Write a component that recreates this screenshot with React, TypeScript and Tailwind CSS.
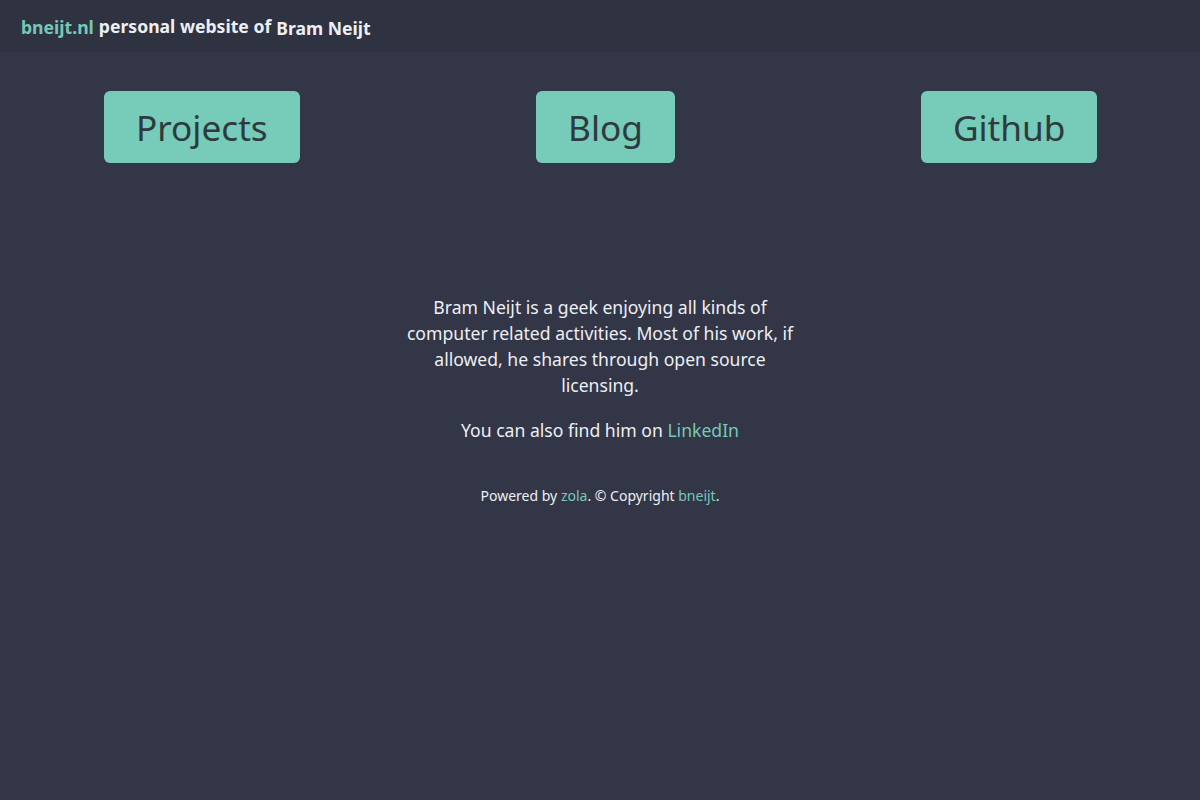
const links = [
  { label: "Projects", href: "/projects" },
  { label: "Blog", href: "/blog" },
  { label: "Github", href: "https://github.com/bneijt" },
]

export default function App() {
  return (
    <div
      className="min-h-screen overflow-x-hidden bg-[#333646] text-[#eceff4]"
      style={{ fontFamily: '"Noto Sans", "Open Sans", sans-serif' }}
    >
      <header className="h-[52px] bg-[#2f3240] px-[21px] flex items-center">
        <span className="text-[17.6px] font-bold text-[#76c8b6] pt-[2px]">bneijt.nl</span>
        <span className="ml-[5px] text-[17.6px] font-bold text-[#eceff4]">personal website of</span>
        <span className="ml-[5px] text-[17.6px] font-bold text-[#eceff4] pt-[4px]">Bram Neijt</span>
      </header>

      <nav className="w-[1211px] grid grid-cols-3 justify-items-center pt-[39px]">
        {links.map((l) => (
          <a
            key={l.label}
            href={l.href}
            className="bg-[#76cbb9] text-[#2e3a40] text-[35.2px] leading-[44px] px-[32px] py-[14px] rounded-[6px]"
          >
            {l.label}
          </a>
        ))}
      </nav>

      <main className="flex flex-col items-center pt-[131px]">
        <p className="max-w-[400px] text-center text-[17.6px] leading-[26px]">
          Bram Neijt is a geek enjoying all kinds of computer related activities. Most of his work, if allowed, he
          shares through open source licensing.
        </p>
        <p className="mt-[19px] text-center text-[17.6px] leading-[26px]">
          You can also find him on{" "}
          <a href="https://www.linkedin.com/in/bneijt" className="text-[#76c8b6]">
            LinkedIn
          </a>
        </p>
      </main>

      <footer className="mt-[43px] text-center text-[14px] leading-[20px]">
        Powered by{" "}
        <a href="https://www.getzola.org" className="text-[#76c8b6]">
          zola
        </a>
        . © Copyright{" "}
        <a href="https://github.com/bneijt" className="text-[#76c8b6]">
          bneijt
        </a>
        .
      </footer>
    </div>
  )
}
